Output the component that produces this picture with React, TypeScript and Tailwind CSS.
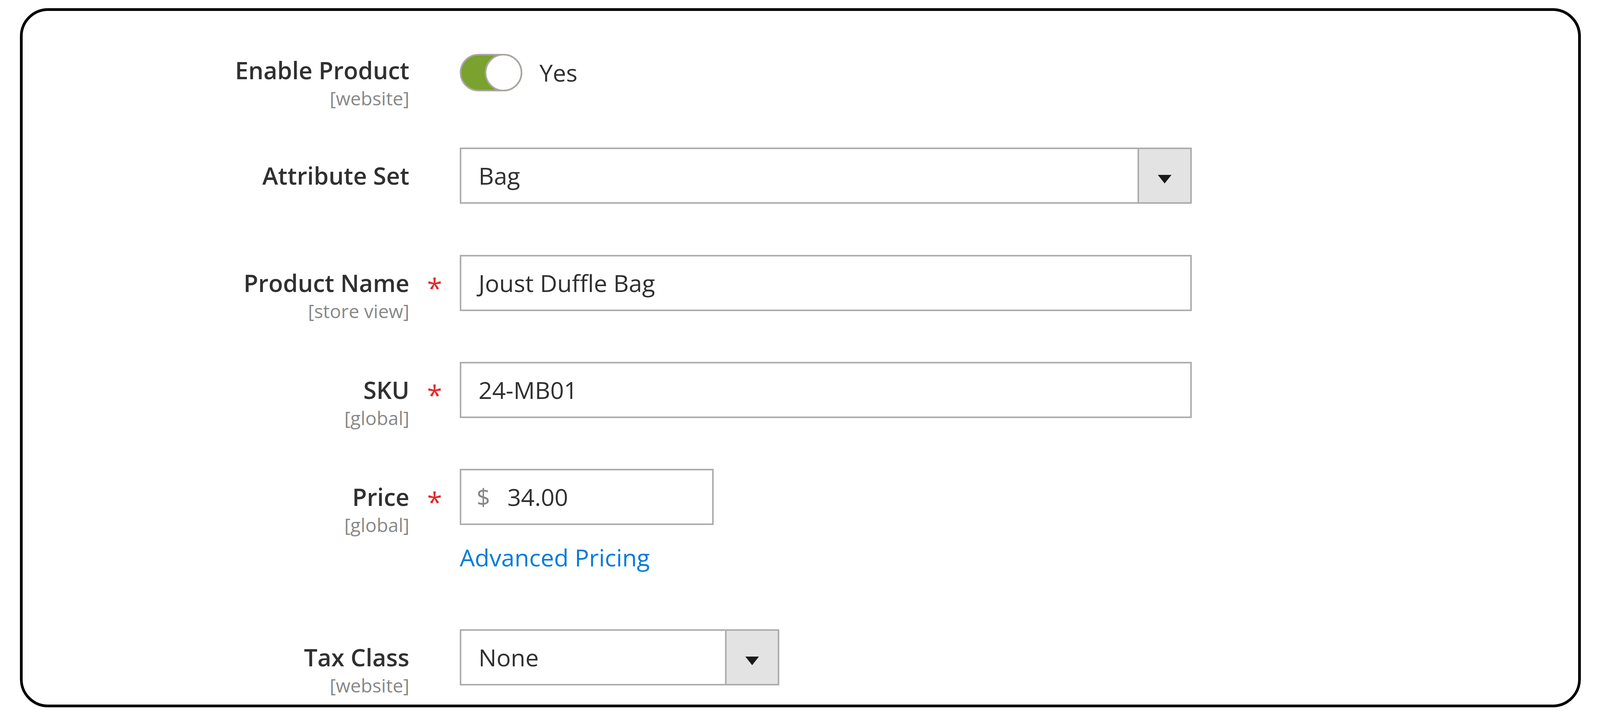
import type { ReactNode } from 'react';

// Magento admin "Product" fieldset, blown up to the screenshot's size (about 4.36x).

interface FieldProps {
    label: string;
    scope?: string;
    required?: boolean;
    className?: string;
    children: ReactNode;
}

function Field({ label, scope, required, className = '', children }: FieldProps) {
    return (
        <div className={`flex items-start pr-[989px] ${className}`}>
            <div className="w-[990px] shrink-0 h-[144px] flex flex-col items-end">
                <span className="h-[144px] shrink-0 flex items-center text-[61px] font-semibold text-[#303030] whitespace-nowrap">{label}</span>
                {scope && (
                    <span className="-mt-[24px] text-[48px] leading-[48px] text-[#888] whitespace-nowrap">[{scope}]</span>
                )}
            </div>
            <div className="w-[129px] shrink-0 h-[144px] flex items-center justify-center">
                {required && <span className="text-[70px] leading-none font-medium text-[#e22626] translate-y-[12px]">*</span>}
            </div>
            <div className="flex-1 min-w-0 flex flex-col items-start">{children}</div>
        </div>
    );
}

function SelectBox({ value, width }: { value: string; width: string }) {
    return (
        <div className={`${width} h-[144px] flex border-4 border-[#adadad] bg-white`}>
            <span className="flex-1 flex items-center pl-[44px] text-[61px] text-[#303030]">{value}</span>
            <span className="w-[135px] border-l-4 border-[#adadad] bg-[#e3e3e3] flex items-center justify-center">
                <svg width="35" height="22" viewBox="0 0 8 5" className="translate-y-[9px]">
                    <polygon points="0,0 8,0 4,5" fill="#1a1a1a" />
                </svg>
            </span>
        </div>
    );
}

function TextBox({ value }: { value: string }) {
    return (
        <div className="w-full h-[144px] flex items-center border-4 border-[#adadad] bg-white pl-[44px] text-[61px] text-[#303030]">
            {value}
        </div>
    );
}

export default function App() {
    return (
        <div className="min-h-[1824px] bg-white pt-[21px] pl-[51px] pr-[49px] font-['Open_Sans',sans-serif]">
            <div className="rounded-[72px] border-[7px] border-black bg-white pt-[80px] pb-[49px]">
                <Field label="Enable Product" scope="website">
                    <div className="h-[144px] pt-[12px] flex items-center gap-[44px]">
                        <span className="relative block w-[160px] h-[96px] rounded-full border-4 border-[#aaa6a0] bg-[#79a22e]">
                            <span className="absolute -right-[4px] -top-[4px] w-[96px] h-[96px] rounded-full border-4 border-[#aaa6a0] bg-white" />
                        </span>
                        <span className="text-[61px] text-[#303030]">Yes</span>
                    </div>
                </Field>

                <Field label="Attribute Set" className="mt-[126px]">
                    <SelectBox value="Bag" width="w-full" />
                </Field>

                <Field label="Product Name" scope="store view" required className="mt-[131px]">
                    <TextBox value="Joust Duffle Bag" />
                </Field>

                <Field label="SKU" scope="global" required className="mt-[130px]">
                    <TextBox value="24-MB01" />
                </Field>

                <Field label="Price" scope="global" required className="mt-[130px]">
                    <div className="w-[650px] h-[144px] flex items-center border-4 border-[#adadad] bg-white pl-[39px] text-[61px]">
                        <span className="text-[#858585]">$</span>
                        <span className="ml-[44px] text-[#303030]">34.00</span>
                    </div>
                    <a href="#" className="mt-[41px] text-[61px] leading-[83px] text-[#007bdb]">Advanced Pricing</a>
                </Field>

                <Field label="Tax Class" scope="website" className="mt-[143px]">
                    <SelectBox value="None" width="w-[818px]" />
                </Field>
            </div>
        </div>
    );
}
